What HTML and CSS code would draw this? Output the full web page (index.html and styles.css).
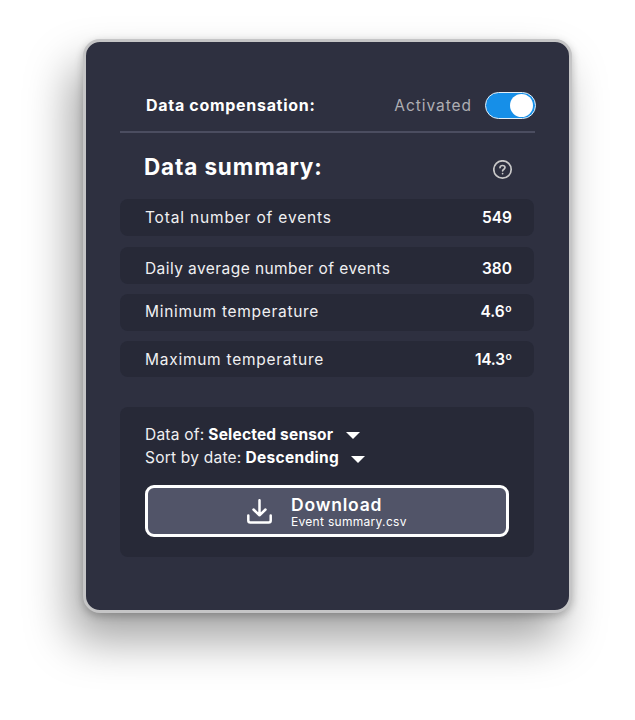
FILE: index.html
```html
<!DOCTYPE html>
<html lang="en">
<head>
<meta charset="utf-8">
<title>Data summary</title>
<link rel="stylesheet" href="styles.css">
</head>
<body>
<main class="card">
  <header class="compensation">
    <span class="compensation-label">Data compensation:</span>
    <span class="compensation-state">Activated</span>
    <span class="toggle"><span class="knob"></span></span>
  </header>
  <div class="title-row">
    <h1 class="title">Data summary:</h1>
    <svg class="help" viewBox="0 0 20 20" fill="none" stroke="#c9c8c8" stroke-width="1.7" stroke-linecap="round" stroke-linejoin="round"><circle cx="9.500" cy="9.500" r="8.700"/><path d="M7 7.600C7.200 6.200 8.200 5.500 9.500 5.500c1.500 0 2.500.900 2.500 2.100 0 1.700-2.400 1.900-2.400 3.200"/><path d="M9.600 13.500v.1"/></svg>
  </div>
  <ul class="stats">
    <li class="stat total"><span class="name">Total number of events</span><strong>549</strong></li>
    <li class="stat average"><span class="name">Daily average number of events</span><strong>380</strong></li>
    <li class="stat minimum"><span class="name">Minimum temperature</span><strong>4.6º</strong></li>
    <li class="stat maximum"><span class="name">Maximum temperature</span><strong>14.3º</strong></li>
  </ul>
  <section class="export">
    <div class="option source"><span class="key">Data of:</span><strong>Selected sensor</strong><svg class="caret" viewBox="0 0 14 7"><path d="M0 0h14L7 7z" fill="#fff"/></svg></div>
    <div class="option sort"><span class="key">Sort by date:</span><strong>Descending</strong><svg class="caret" viewBox="0 0 14 7"><path d="M0 0h14L7 7z" fill="#fff"/></svg></div>
    <button class="download">
      <svg class="download-icon" viewBox="0 0 26 26" fill="none" stroke="#fff" stroke-width="2.5" stroke-linecap="round" stroke-linejoin="round"><path d="M12.500 1.200v15M6.500 10.500l6 5.800 6-5.800M1.300 16.500v5q0 2 2 2h18.400q2 0 2-2v-5"/></svg>
      <span class="download-text"><span class="download-title">Download</span><span class="download-file">Event summary.csv</span></span>
    </button>
  </section>
</main>
</body>
</html>
```

FILE: styles.css
```css
* { box-sizing: border-box; }
body { margin: 0; background: #fff; padding: 39px 63px 0 83px; height: 720px; overflow: hidden; font: 15.5px/24px Inter, "Open Sans", sans-serif; color: #f0f0f2; }

.card { width: 489px; height: 574px; border: 3px solid #c5c5c6; border-radius: 17px; background: #2e3040; padding: 50px 34px 0; box-shadow: -12px 27px 46px rgba(0,0,0,.36), 0 3px 8px rgba(0,0,0,.24); }

.compensation { display: flex; align-items: center; width: 415px; height: 41px; padding-bottom: 13px; padding-left: 26px; border-bottom: 2px solid #4b4d60; }
.compensation-label { flex: 1; font-size: 16px; font-weight: 700; letter-spacing: .7px; color: #fff; padding-bottom: 1px; }
.compensation-state { color: #aeaeb3; margin-right: 13px; letter-spacing: .95px; padding-top: 2px; }
.toggle { width: 51px; height: 27px; margin-right: -1px; border: 1px solid #e3eef7; border-radius: 14px; background: #168fe8; display: flex; justify-content: flex-end; align-items: center; padding-right: 2px; }
.knob { width: 23px; height: 23px; border-radius: 50%; background: #fff; }

.title-row { display: flex; justify-content: space-between; align-items: center; height: 66px; padding: 2px 22px 0 24px; }
.title { margin: 0; font-size: 22.5px; line-height: 28px; font-weight: 750; letter-spacing: .87px; color: #fff; }
.help { width: 20px; height: 20px; margin-top: 5px; }

.stats { list-style: none; margin: 0; padding: 0; width: 414px; }
.stat { display: flex; justify-content: space-between; align-items: center; height: 37px; border-radius: 8px; background: #272937; padding: 0 22px 0 25px; margin-bottom: 10px; }
.stat strong { font-weight: 600; color: #fff; }
.total { margin-bottom: 11px; }
.total .name { letter-spacing: .83px; }
.average { padding-top: 6px; }
.average .name { letter-spacing: .43px; }
.minimum { padding-bottom: 2px; }
.minimum .name { letter-spacing: .7px; }
.maximum { height: 36px; padding-top: 1px; }
.maximum .name { letter-spacing: .74px; }
.maximum strong { letter-spacing: -.2px; }

.export { width: 414px; height: 150px; margin-top: 30px; border-radius: 8px; background: #272937; padding: 16px 25px 0; }
.option { display: flex; align-items: center; height: 23px; }
.option strong { margin-left: 4px; color: #fff; }
.key { letter-spacing: .22px; }
.source strong { letter-spacing: .18px; }
.sort strong { letter-spacing: .3px; }
.caret { width: 14px; height: 7px; margin: 1px 0 0 13px; }
.sort .caret { margin-left: 12px; margin-top: 3px; }

.download { display: flex; align-items: center; width: 364px; height: 52px; margin-top: 16px; padding: 1px 0 0 99px; border: 3px solid #fff; border-radius: 9px; background: #515468; color: #fff; font-family: inherit; text-align: left; }
.download-icon { width: 26px; height: 26px; margin-right: 18px; }
.download-text { display: flex; flex-direction: column; padding-top: 1px; }
.download-title { font-size: 17.5px; line-height: 19px; font-weight: 600; letter-spacing: .82px; }
.download-file { font-size: 12px; line-height: 15px; letter-spacing: .3px; }
```
